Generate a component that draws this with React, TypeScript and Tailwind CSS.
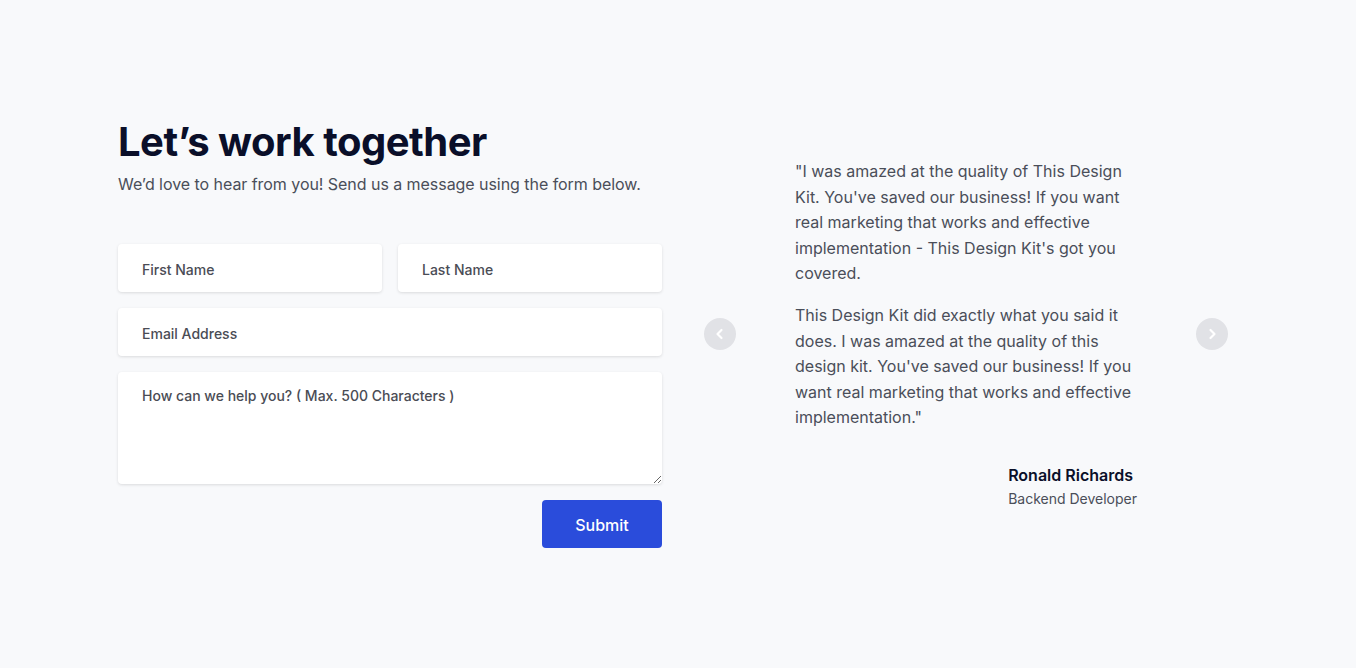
import React from 'react'

const Chevron = ({ dir }: { dir: 'left' | 'right' }) => (
    <button className='w-8 h-8 rounded-full bg-[#e1e2e6] flex items-center justify-center shrink-0'>
        <svg width="14" height="14" viewBox="0 0 14 14" fill="none">
            {dir === 'left'
                ? <path d="M8.5 3 4.5 7l4 4" stroke="white" strokeWidth="2.2" strokeLinecap="round" strokeLinejoin="round" />
                : <path d="M5.5 3 9.5 7l-4 4" stroke="white" strokeWidth="2.2" strokeLinecap="round" strokeLinejoin="round" />}
        </svg>
    </button>
)

const baseCls = 'w-full rounded bg-white px-6 text-sm font-medium text-[#44464f] placeholder:text-[#4a4c55] shadow-[0_1px_3px_rgba(0,0,0,0.12)] outline-none'
const inputCls = baseCls + ' h-12 pt-[3px]'

const App = () => {
    return (
        <div className='min-h-[668px] w-full bg-[#f8f9fb] flex items-center pl-[118px]' style={{ fontFamily: 'Inter, "Noto Sans", sans-serif' }}>
            <div className='flex items-center gap-[42px]'>
                {/* form */}
                <div className='w-[544px] flex flex-col pb-[3px]'>
                    <h1 className='text-[40px] leading-[48px] font-bold text-[#0a0f29] tracking-[-0.5px]'>Let’s work together</h1>
                    <p className='mt-1.5 text-base leading-6 text-[#4a4e59] tracking-[-0.05px]'>We’d love to hear from you! Send us a message using the form below.</p>

                    <div className='mt-12 flex flex-col gap-4'>
                        <div className='flex gap-4'>
                            <input className={inputCls} placeholder='First Name' />
                            <input className={inputCls} placeholder='Last Name' />
                        </div>
                        <input className={inputCls} placeholder='Email Address' />
                        <textarea
                            className={baseCls + ' h-[112px] pt-[12px] leading-6'}
                            placeholder='How can we help you? ( Max. 500 Characters )'
                        />
                        <div className='flex justify-end'>
                            <button className='w-[120px] h-12 pt-0.5 rounded bg-[#2a4cdb] text-white text-base font-medium'>Submit</button>
                        </div>
                    </div>
                </div>

                {/* testimonial */}
                <div className='flex items-center gap-[59px]'>
                    <Chevron dir='left' />
                    <div className='w-[342px] flex flex-col text-base leading-[1.6] text-[#4a4e59]'>
                        <p>"I was amazed at the quality of This Design Kit. You've saved our business! If you want real marketing that works and effective implementation - This Design Kit's got you covered.</p>
                        <p className='mt-4'>This Design Kit did exactly what you said it does. I was amazed at the quality of this design kit. You've saved our business! If you want real marketing that works and effective implementation."</p>
                        <div className='mt-8 self-end flex flex-col'>
                            <span className='text-base leading-6 font-semibold text-[#0a0f29]'>Ronald Richards</span>
                            <span className='mt-0.5 text-sm leading-5 text-[#4a4e59]'>Backend Developer</span>
                        </div>
                    </div>
                    <Chevron dir='right' />
                </div>
            </div>
        </div>
    )
}

export default App
